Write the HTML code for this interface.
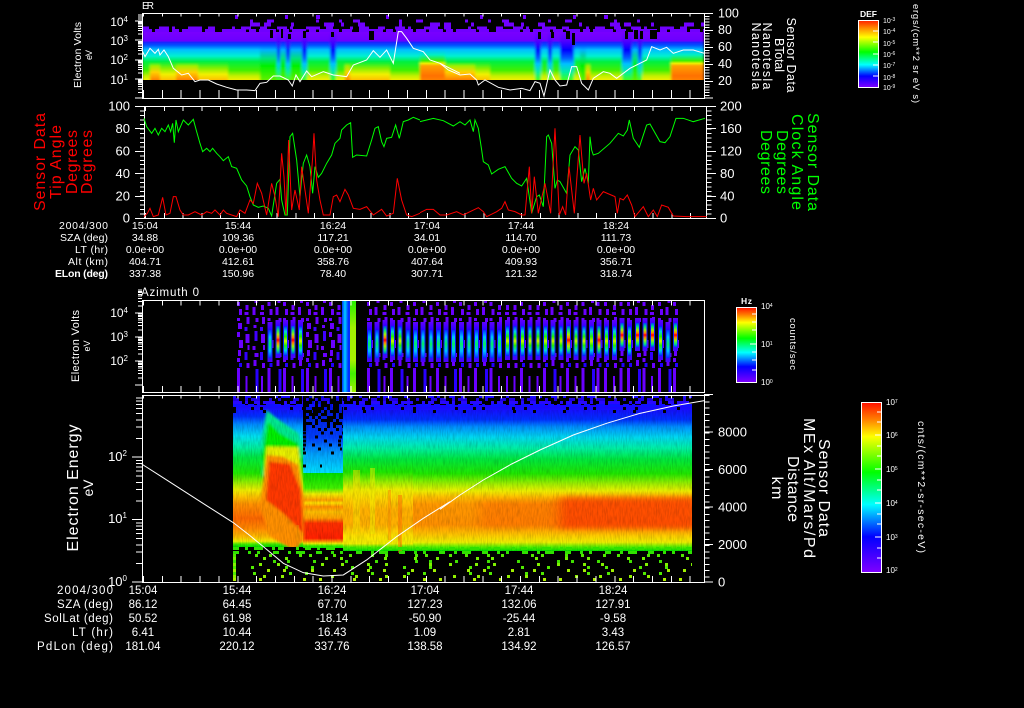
<!DOCTYPE html>
<html lang="en"><head><meta charset="utf-8"><title>MEx sensor data</title>
<style>
html,body{margin:0;padding:0;background:#000;overflow:hidden}
svg{display:block}
text{font-family:"Liberation Sans",sans-serif;fill:#fff}
.r{font-size:10.5px}.q{font-size:11.5px}
.e{text-anchor:end}.m{text-anchor:middle}
.ax{font-size:13px}
.ln{fill:none;stroke-width:1;vector-effect:non-scaling-stroke}
.nss{fill:none;stroke:#fff;stroke-width:1;vector-effect:non-scaling-stroke}
</style></head><body>
<svg xmlns="http://www.w3.org/2000/svg" width="1024" height="708" viewBox="0 0 1024 708">
<defs>
<!-- P1 gradients -->
<linearGradient id="g1" gradientUnits="userSpaceOnUse" x1="0" x2="0" y1="28" y2="80"><stop offset="0" stop-color="#8000ff"/><stop offset=".25" stop-color="#6a00ff"/><stop offset=".27" stop-color="#2020ff"/><stop offset=".33" stop-color="#0050ff"/><stop offset=".42" stop-color="#00c0ff"/><stop offset=".54" stop-color="#00f0d0"/><stop offset=".65" stop-color="#00f040"/><stop offset=".81" stop-color="#40f000"/><stop offset=".92" stop-color="#c0f000"/><stop offset="1" stop-color="#f0f000"/></linearGradient>
<linearGradient id="g2" gradientUnits="userSpaceOnUse" x1="0" x2="0" y1="28" y2="80"><stop offset="0" stop-color="#8000ff"/><stop offset=".25" stop-color="#6a00ff"/><stop offset=".27" stop-color="#2020ff"/><stop offset=".33" stop-color="#0050ff"/><stop offset=".42" stop-color="#00c0ff"/><stop offset=".54" stop-color="#00f0d0"/><stop offset=".65" stop-color="#00f040"/><stop offset=".73" stop-color="#a0f000"/><stop offset=".85" stop-color="#ffd000"/><stop offset="1" stop-color="#ff8000"/></linearGradient>
<linearGradient id="g3" gradientUnits="userSpaceOnUse" x1="0" x2="0" y1="28" y2="80"><stop offset="0" stop-color="#8000ff"/><stop offset=".25" stop-color="#5000ff"/><stop offset=".42" stop-color="#0000ff"/><stop offset=".58" stop-color="#0060ff"/><stop offset=".69" stop-color="#00c0ff"/><stop offset=".85" stop-color="#00f0a0"/><stop offset="1" stop-color="#40ff20"/></linearGradient>
<linearGradient id="g4" gradientUnits="userSpaceOnUse" x1="0" x2="0" y1="28" y2="80"><stop offset="0" stop-color="#8000ff"/><stop offset=".25" stop-color="#6a00ff"/><stop offset=".27" stop-color="#2020ff"/><stop offset=".33" stop-color="#0050ff"/><stop offset=".42" stop-color="#00c0ff"/><stop offset=".54" stop-color="#00f0d0"/><stop offset=".65" stop-color="#00f040"/><stop offset=".77" stop-color="#80f000"/><stop offset=".89" stop-color="#f0f000"/><stop offset="1" stop-color="#ffc000"/></linearGradient>
<linearGradient id="g5" gradientUnits="userSpaceOnUse" x1="0" x2="0" y1="28" y2="80"><stop offset="0" stop-color="#8000ff"/><stop offset=".25" stop-color="#6a00ff"/><stop offset=".27" stop-color="#2020ff"/><stop offset=".33" stop-color="#0050ff"/><stop offset=".42" stop-color="#00b0ff"/><stop offset=".58" stop-color="#00e080"/><stop offset=".73" stop-color="#00f000"/><stop offset="1" stop-color="#60f000"/></linearGradient>
<linearGradient id="g6" gradientUnits="userSpaceOnUse" x1="0" x2="0" y1="28" y2="80"><stop offset="0" stop-color="#8000ff"/><stop offset=".25" stop-color="#6a00ff"/><stop offset=".27" stop-color="#2020ff"/><stop offset=".33" stop-color="#0050ff"/><stop offset=".42" stop-color="#00c0ff"/><stop offset=".52" stop-color="#00f0c0"/><stop offset=".63" stop-color="#40f000"/><stop offset=".68" stop-color="#f0f000"/><stop offset=".73" stop-color="#ffa000"/><stop offset=".92" stop-color="#ff7000"/><stop offset="1" stop-color="#ff8000"/></linearGradient>
<!-- colourbars -->
<linearGradient id="cb1" x1="0" x2="0" y1="0" y2="1"><stop offset="0" stop-color="#ff2000"/><stop offset=".12" stop-color="#ff9000"/><stop offset=".25" stop-color="#ffff00"/><stop offset=".47" stop-color="#00ff00"/><stop offset=".66" stop-color="#00ffff"/><stop offset=".83" stop-color="#0000ff"/><stop offset="1" stop-color="#8000ff"/></linearGradient>
<linearGradient id="cb2" x1="0" x2="0" y1="0" y2="1"><stop offset="0" stop-color="#ff1000"/><stop offset=".1" stop-color="#ff8000"/><stop offset=".2" stop-color="#ffff00"/><stop offset=".41" stop-color="#00ff00"/><stop offset=".6" stop-color="#00ffff"/><stop offset=".79" stop-color="#0000ff"/><stop offset="1" stop-color="#8000ff"/></linearGradient>
<!-- P3 streaks -->
<linearGradient id="gb" x1="0" x2="0" y1="0" y2="1"><stop offset="0" stop-color="#6000ff"/><stop offset=".3" stop-color="#1000ff"/><stop offset=".7" stop-color="#0030ff"/><stop offset="1" stop-color="#5000ff"/></linearGradient>
<linearGradient id="gs1" x1="0" x2="0" y1="0" y2="1"><stop offset="0" stop-color="#0030ff"/><stop offset=".25" stop-color="#00c0ff"/><stop offset=".5" stop-color="#00f060"/><stop offset=".75" stop-color="#00c0ff"/><stop offset="1" stop-color="#0030ff"/></linearGradient>
<linearGradient id="gs2" x1="0" x2="0" y1="0" y2="1"><stop offset="0" stop-color="#0020ff"/><stop offset=".18" stop-color="#00d0e0"/><stop offset=".35" stop-color="#20f000"/><stop offset=".5" stop-color="#d0f000"/><stop offset=".65" stop-color="#20f000"/><stop offset=".82" stop-color="#00d0e0"/><stop offset="1" stop-color="#0020ff"/></linearGradient>
<linearGradient id="gs3" x1="0" x2="0" y1="0" y2="1"><stop offset="0" stop-color="#0040ff"/><stop offset=".15" stop-color="#00e080"/><stop offset=".3" stop-color="#a0f000"/><stop offset=".42" stop-color="#ff8000"/><stop offset=".5" stop-color="#ff0000"/><stop offset=".6" stop-color="#ff8000"/><stop offset=".72" stop-color="#a0f000"/><stop offset=".88" stop-color="#00e080"/><stop offset="1" stop-color="#0040ff"/></linearGradient>
<linearGradient id="gc" x1="0" x2="1" y1="0" y2="0"><stop offset="0" stop-color="#0030ff"/><stop offset=".5" stop-color="#00d0ff"/><stop offset="1" stop-color="#0040ff"/></linearGradient>
<linearGradient id="gg" gradientUnits="userSpaceOnUse" x1="0" x2="0" y1="300" y2="392"><stop offset="0" stop-color="#20f000"/><stop offset=".3" stop-color="#a0f000"/><stop offset=".65" stop-color="#a8f000"/><stop offset=".8" stop-color="#40f000"/><stop offset="1" stop-color="#a0f000"/></linearGradient>
<!-- P4 gradients -->
<linearGradient id="gL" gradientUnits="userSpaceOnUse" x1="0" x2="0" y1="405" y2="547"><stop offset="0" stop-color="#2000ff"/><stop offset=".08" stop-color="#0030ff"/><stop offset=".14" stop-color="#0090ff"/><stop offset=".22" stop-color="#00e0f0"/><stop offset=".3" stop-color="#00f0a0"/><stop offset=".37" stop-color="#00e840"/><stop offset=".48" stop-color="#20e800"/><stop offset=".56" stop-color="#b0f000"/><stop offset=".6" stop-color="#f0f000"/><stop offset=".65" stop-color="#ffc000"/><stop offset=".7" stop-color="#ff9000"/><stop offset=".8" stop-color="#ff6800"/><stop offset=".87" stop-color="#ff8800"/><stop offset=".93" stop-color="#ffc000"/><stop offset=".96" stop-color="#f0f000"/><stop offset=".98" stop-color="#40f000"/><stop offset="1" stop-color="#00e000"/></linearGradient>
<linearGradient id="gY" gradientUnits="userSpaceOnUse" x1="0" x2="0" y1="405" y2="551"><stop offset="0" stop-color="#2000ff"/><stop offset=".1" stop-color="#0030ff"/><stop offset=".15" stop-color="#0090ff"/><stop offset=".22" stop-color="#00d8f0"/><stop offset=".3" stop-color="#00f0a0"/><stop offset=".37" stop-color="#00e840"/><stop offset=".46" stop-color="#20e800"/><stop offset=".53" stop-color="#a0f000"/><stop offset=".58" stop-color="#f0f000"/><stop offset=".65" stop-color="#ffd000"/><stop offset=".72" stop-color="#ffb000"/><stop offset=".82" stop-color="#ffb000"/><stop offset=".89" stop-color="#ffe000"/><stop offset=".95" stop-color="#f0f000"/><stop offset=".97" stop-color="#60f000"/><stop offset="1" stop-color="#00e000"/></linearGradient>
<linearGradient id="gR" gradientUnits="userSpaceOnUse" x1="0" x2="0" y1="405" y2="551"><stop offset="0" stop-color="#2000ff"/><stop offset=".1" stop-color="#0030ff"/><stop offset=".15" stop-color="#0090ff"/><stop offset=".22" stop-color="#00d8f0"/><stop offset=".3" stop-color="#00f0a0"/><stop offset=".37" stop-color="#00e840"/><stop offset=".47" stop-color="#20e800"/><stop offset=".54" stop-color="#a0f000"/><stop offset=".59" stop-color="#f0f000"/><stop offset=".63" stop-color="#ffc000"/><stop offset=".68" stop-color="#ff9800"/><stop offset=".82" stop-color="#ff9000"/><stop offset=".89" stop-color="#ffc800"/><stop offset=".94" stop-color="#f0f000"/><stop offset=".97" stop-color="#60f000"/><stop offset="1" stop-color="#00e000"/></linearGradient>
<linearGradient id="gM" gradientUnits="userSpaceOnUse" x1="0" x2="0" y1="473" y2="548"><stop offset="0" stop-color="#00e000"/><stop offset=".2" stop-color="#40f000"/><stop offset=".28" stop-color="#f0f000"/><stop offset=".36" stop-color="#ffa000"/><stop offset=".4" stop-color="#ffe000"/><stop offset=".45" stop-color="#ff9000"/><stop offset=".52" stop-color="#ffc000"/><stop offset=".6" stop-color="#ffa000"/><stop offset=".67" stop-color="#ff3000"/><stop offset=".87" stop-color="#ff2000"/><stop offset=".91" stop-color="#ff9000"/><stop offset=".94" stop-color="#f0f000"/><stop offset=".97" stop-color="#40f000"/><stop offset="1" stop-color="#00e000"/></linearGradient>
<linearGradient id="gU" gradientUnits="userSpaceOnUse" x1="0" x2="0" y1="395" y2="473"><stop offset="0" stop-color="#0000d0"/><stop offset=".55" stop-color="#0040ff"/><stop offset=".75" stop-color="#00a0ff"/><stop offset="1" stop-color="#00e0ff"/></linearGradient>
<filter id="bl" x="-10%" y="-10%" width="120%" height="120%"><feGaussianBlur stdDeviation="4"/></filter>
<filter id="bl2" x="-10%" y="-30%" width="120%" height="160%"><feGaussianBlur stdDeviation="6 3"/></filter>
<filter id="hb" x="0" y="0" width="100%" height="100%"><feGaussianBlur stdDeviation="1.3 0"/></filter>
<filter id="nz" x="0" y="0" width="100%" height="100%"><feTurbulence type="fractalNoise" baseFrequency=".8 .12" numOctaves="2" seed="7"/><feColorMatrix values="0 0 0 0 0  0 0 0 0 0  0 0 0 0 0  1.1 0 0 0 -.42"/></filter>
<clipPath id="c4"><rect x="233" y="395" width="459" height="187"/></clipPath>
<path id="lg" class="nss" d="M-7 0H0M-4 -30H0M-4 -48H0M-4 -60H0M-4 -70H0M-4 -78H0M-4 -85H0M-4 -90H0M-4 -95H0"/>
<path id="lg4" class="nss" d="M-10 0H0M-6 -30H0M-6 -48H0M-6 -60H0M-6 -70H0M-6 -78H0M-6 -85H0M-6 -90H0M-6 -95H0"/>
<!-- P3 columns -->
<g id="a" fill="#6a00ff"><rect y="302" width="3" height="4"/><rect x="2" y="309" width="3" height="6"/><rect y="318" width="3" height="3"/><rect x="1" y="323" width="4" height="6"/><rect y="332" width="3" height="5"/><rect x="2" y="340" width="4" height="8"/><rect x="1" y="350" width="3" height="6"/><rect y="358" width="3" height="4"/><rect x="2" y="363" width="3" height="4" fill="#2000ff"/><rect y="368" width="3" height="24"/></g>
<g id="b" fill="#6a00ff"><rect x="1" y="305" width="3" height="5"/><rect y="312" width="4" height="3"/><rect x="2" y="317" width="3" height="7"/><rect y="327" width="3" height="4" fill="#4000ff"/><rect x="1" y="334" width="4" height="9"/><rect x="3" y="345" width="2" height="5"/><rect y="352" width="3" height="8" fill="#3000ff"/><rect x="2" y="363" width="3" height="5"/><rect x="1" y="376" width="2" height="16"/></g>
<g id="c" fill="#6a00ff"><rect x="2" y="300" width="3" height="3"/><rect y="307" width="3" height="8"/><rect x="3" y="318" width="3" height="4"/><rect x="1" y="325" width="3" height="3"/><rect x="2" y="331" width="3" height="10" fill="#4000ff"/><rect y="346" width="3" height="4"/><rect x="2" y="353" width="4" height="4"/><rect x="1" y="360" width="3" height="6"/><rect x="3" y="369" width="3" height="23" fill="#2800ff"/></g>
<g id="s1"><rect y="322" width="5" height="40" fill="url(#gb)"/><rect x="1" y="330" width="3" height="28" fill="url(#gs1)"/></g>
<g id="s2"><rect y="320" width="5" height="40" fill="url(#gb)"/><rect x="1" y="326" width="3" height="30" fill="url(#gs2)"/></g>
<g id="s3"><rect y="320" width="5" height="38" fill="url(#gb)"/><rect x="1" y="326" width="3" height="28" fill="url(#gs3)"/></g>
<g id="s4"><rect y="318" width="5" height="33" fill="url(#gb)"/><rect x="1" y="323" width="3" height="24" fill="url(#gs3)"/></g>
</defs>
<rect width="1024" height="708" fill="#000"/>

<!-- ============ PANEL 1 ============ -->
<g filter="url(#hb)">
<rect x="142" y="32" width="8" height="48" fill="url(#g1)"/><rect x="150" y="32" width="10" height="48" fill="url(#g2)"/><rect x="160" y="32" width="16" height="48" fill="url(#g4)"/><rect x="176" y="32" width="22" height="48" fill="url(#g2)"/><rect x="198" y="32" width="30" height="48" fill="url(#g4)"/><rect x="228" y="32" width="32" height="48" fill="url(#g1)"/><rect x="260" y="32" width="17" height="48" fill="url(#g5)"/><rect x="277" y="32" width="3" height="48" fill="url(#g3)"/><rect x="280" y="32" width="6" height="48" fill="url(#g5)"/><rect x="286" y="32" width="4" height="48" fill="url(#g3)"/><rect x="290" y="32" width="12" height="48" fill="url(#g5)"/><rect x="302" y="32" width="5" height="48" fill="url(#g3)"/><rect x="307" y="32" width="23" height="48" fill="url(#g1)"/><rect x="330" y="32" width="6" height="48" fill="url(#g3)"/><rect x="336" y="32" width="9" height="48" fill="url(#g1)"/><rect x="345" y="32" width="5" height="48" fill="url(#g2)"/><rect x="350" y="32" width="40" height="48" fill="url(#g4)"/><rect x="390" y="32" width="30" height="48" fill="url(#g1)"/><rect x="420" y="32" width="25" height="48" fill="url(#g6)"/><rect x="445" y="32" width="30" height="48" fill="url(#g2)"/><rect x="475" y="32" width="15" height="48" fill="url(#g4)"/><rect x="490" y="32" width="45" height="48" fill="url(#g1)"/><rect x="535" y="32" width="6" height="48" fill="url(#g3)"/><rect x="541" y="32" width="7" height="48" fill="url(#g1)"/><rect x="548" y="32" width="4" height="48" fill="url(#g3)"/><rect x="552" y="32" width="8" height="48" fill="url(#g1)"/><rect x="560" y="32" width="14" height="48" fill="url(#g3)"/><rect x="574" y="32" width="6" height="48" fill="url(#g1)"/><rect x="580" y="32" width="6" height="48" fill="url(#g5)"/><rect x="586" y="32" width="4" height="48" fill="url(#g2)"/><rect x="590" y="32" width="32" height="48" fill="url(#g1)"/><rect x="622" y="32" width="10" height="48" fill="url(#g3)"/><rect x="632" y="32" width="6" height="48" fill="url(#g5)"/><rect x="638" y="32" width="4" height="48" fill="url(#g3)"/><rect x="642" y="32" width="29" height="48" fill="url(#g1)"/><rect x="671" y="32" width="33" height="48" fill="url(#g6)"/>
</g>
<rect x="142" y="80" width="562" height="3" fill="#000"/>
<g shape-rendering="crispEdges">
<g fill="none" stroke="#7000ff">
<line x1="142" x2="704" y1="30.5" stroke-width="3" y2="30.5" stroke-dasharray="10 3 14 3 7 3 20 3 10 7 24 3 7 3 17 3"/>
<line x1="142" x2="704" y1="28" y2="28" stroke-width="3" stroke-dasharray="7 10 10 3 3 13 14 6 7 17 3 6 10 9"/>
<line x1="250" x2="704" y1="24.5" y2="24.5" stroke-width="4" stroke-dasharray="10 4 7 20 3 30 10 7 3 14 7 34 3 28"/>
<line x1="250" x2="640" y1="21" y2="21" stroke-width="3" stroke-dasharray="3 14 7 42 3 20 3 11 7 39"/>
<line x1="235" x2="640" y1="17" y2="17" stroke-width="4" stroke-dasharray="3 47 3 28 4 66 3 91 3 40"/>
</g>
<g fill="#000"><rect x="270" y="30" width="3" height="8"/><rect x="281" y="29" width="2" height="9"/><rect x="288" y="34" width="3" height="5"/><rect x="303" y="31" width="3" height="7"/><rect x="331" y="32" width="3" height="5"/><rect x="369" y="31" width="5" height="9"/><rect x="538" y="32" width="3" height="7"/><rect x="551" y="32" width="3" height="6"/><rect x="566" y="31" width="4" height="8"/><rect x="572" y="33" width="3" height="12"/><rect x="625" y="31" width="3" height="8"/><rect x="634" y="30" width="4" height="9"/><rect x="640" y="31" width="3" height="8"/><rect x="650" y="30" width="7" height="9"/></g>
<rect x="142.5" y="13.5" width="562" height="85" fill="none" stroke="#fff"/>
<line x1="143" x2="704" y1="15" y2="15" stroke="#fff" stroke-width="3" stroke-dasharray="1 17.85"/>
<line x1="143" x2="704" y1="94" y2="94" stroke="#fff" stroke-width="8" stroke-dasharray="1 17.85"/>
<line x1="707" x2="707" y1="13" y2="98" stroke="#fff" stroke-width="5" stroke-dasharray="1 1.83"/>
<path d="M704 13.5H713M704 30.5H713M704 47.5H713M704 64.5H713M704 81.5H713M704 98H713" stroke="#fff" fill="none"/>
<use href="#lg" transform="translate(142,98) scale(1,.19)"/>
<use href="#lg" transform="translate(142,79) scale(1,.195)"/>
<use href="#lg" transform="translate(142,60) scale(1,.195)"/>
<use href="#lg" transform="translate(142,40) scale(1,.195)"/>
<path d="M135 21H142M138 19H142M138 17H142M138 15H142" stroke="#fff"/>
</g>
<polyline class="ln" stroke="#fff" transform="translate(60,0) scale(.3333)" points="245,148 255,170 270,145 285,160 295,148 300,165 312,150 325,170 340,205 365,225 385,220 405,245 420,240 445,240 470,252 500,262 530,270 560,270 585,272 600,250 620,247 640,228 660,228 685,240 697,258 708,225 720,245 740,213 755,230 790,215 820,225 860,230 880,195 920,180 940,152 960,172 980,150 1000,190 1015,95 1025,95 1040,115 1060,145 1090,155 1110,180 1140,190 1170,205 1200,220"/>
<polyline class="ln" stroke="#fff" transform="translate(440,0) scale(.3333)" points="0,190 25,210 60,225 90,222 110,240 115,255 135,240 175,262 210,270 245,265 270,272 285,245 300,250 312,288 330,210 345,240 360,258 380,255 395,200 410,200 425,250 445,270 460,235 490,215 510,220 530,235 570,205 600,190 620,180 635,140 660,150 680,142 700,160 730,150 760,150 793,160"/>
<text x="142" y="9" font-size="10" textLength="12">ER</text>
<g font-size="12"><text x="128" y="26" class="e">10<tspan font-size="8" dy="-4">4</tspan></text><text x="128" y="45" class="e">10<tspan font-size="8" dy="-4">3</tspan></text><text x="128" y="64" class="e">10<tspan font-size="8" dy="-4">2</tspan></text><text x="128" y="84" class="e">10<tspan font-size="8" dy="-4">1</tspan></text></g>
<g font-size="12.5"><text x="718" y="17.5">100</text><text x="718" y="34">80</text><text x="718" y="51">60</text><text x="718" y="68">40</text><text x="718" y="85">20</text></g>
<text transform="translate(81,55) rotate(-90)" class="m" font-size="10.5" textLength="66">Electron Volts</text>
<text transform="translate(92,55) rotate(-90)" class="m" font-size="9" textLength="10">eV</text>
<g font-size="12.5">
<text transform="translate(787,55) rotate(90)" class="m" textLength="75">Sensor Data</text>
<text transform="translate(775,55) rotate(90)" class="m" textLength="34">BTotal</text>
<text transform="translate(763,56) rotate(90)" class="m" textLength="67">Nanotesla</text>
<text transform="translate(752,56) rotate(90)" class="m" textLength="67">Nanotesla</text>
</g>
<!-- colourbar 1 -->
<rect x="858.5" y="20.5" width="20" height="67" fill="url(#cb1)" stroke="#fff"/>
<text x="860" y="17" font-size="8.5" font-weight="bold" textLength="17">DEF</text>
<path d="M873 31H878M873 42H878M873 54H878M873 65H878M873 76H878" stroke="#fff" fill="none"/>
<g font-size="7"><text x="883" y="23">10<tspan font-size="5" dy="-2">-3</tspan></text><text x="883" y="34">10<tspan font-size="5" dy="-2">-4</tspan></text><text x="883" y="46">10<tspan font-size="5" dy="-2">-5</tspan></text><text x="883" y="57">10<tspan font-size="5" dy="-2">-6</tspan></text><text x="883" y="68">10<tspan font-size="5" dy="-2">-7</tspan></text><text x="883" y="80">10<tspan font-size="5" dy="-2">-8</tspan></text><text x="883" y="90">10<tspan font-size="5" dy="-2">-9</tspan></text></g>
<text transform="translate(913,4) rotate(90)" font-size="9.5" textLength="99">ergs/(cm**2 sr eV s)</text>

<!-- ============ PANEL 2 ============ -->
<g shape-rendering="crispEdges">
<rect x="144.5" y="106.5" width="562" height="112" fill="none" stroke="#fff"/>
<line x1="145" x2="706" y1="108.5" y2="108.5" stroke="#fff" stroke-width="5" stroke-dasharray="1 17.8"/>
<line x1="145" x2="706" y1="215.5" y2="215.5" stroke="#fff" stroke-width="5" stroke-dasharray="1 17.8"/>
<line x1="142" x2="142" y1="106" y2="218" stroke="#fff" stroke-width="4" stroke-dasharray="1 3.48"/>
<line x1="709" x2="709" y1="106" y2="218" stroke="#fff" stroke-width="5" stroke-dasharray="1 3.48"/>
<path d="M135 106.5H144M135 128.5H144M135 151.5H144M135 173.5H144M135 196.5H144M135 218.5H144M706 106.5H716M706 128.5H716M706 151.5H716M706 173.5H716M706 196.5H716M706 218.5H716" stroke="#fff" fill="none"/>
</g>
<polyline class="ln" stroke="#0f0" transform="translate(20,100) scale(.3333)" points="372,55 380,80 395,100 405,85 415,105 425,85 435,95 445,75 452,95 458,70 463,128 468,60 475,95 490,60 505,75 520,58 530,95 540,130 548,155 560,145 570,155 578,145 590,160 600,170 610,182 625,170 635,200 650,205 665,240 680,258 690,290 700,315 715,322 730,318 745,325 755,348 770,250 780,238 785,300 795,345 802,345 810,110 818,100 830,180 840,290 850,190 860,165 870,200 878,280 885,200 895,232 905,220 920,190 935,165 945,130 960,115 965,90 980,75 992,68 998,172 1010,165 1040,168 1055,120 1065,85 1075,80 1085,125 1092,140 1100,115 1115,112 1127,75 1138,115 1150,65 1165,60 1180,52 1200,60"/>
<polyline class="ln" stroke="#0f0" transform="translate(420,100) scale(.3333)" points="0,65 40,55 70,62 100,78 120,65 135,75 150,60 160,95 165,60 175,85 185,150 190,185 205,195 215,222 235,208 255,200 275,235 290,250 305,258 320,235 335,340 350,290 358,285 370,320 380,110 385,105 395,130 405,265 412,240 420,245 440,280 450,165 465,140 475,150 485,245 495,205 505,250 510,110 515,150 520,165 535,160 570,130 595,100 610,108 622,90 628,60 640,115 658,142 680,75 690,72 720,125 735,128 750,110 768,55 790,55 820,65 855,55"/>
<polyline class="ln" stroke="#f00" transform="translate(20,100) scale(.3333)" points="372,350 382,340 390,325 400,350 415,345 428,292 438,345 450,340 460,290 468,290 480,330 490,345 505,345 525,335 545,345 560,335 575,340 585,330 600,345 610,330 620,340 635,345 650,350 660,330 675,340 690,300 700,310 712,250 725,280 740,345 755,250 765,290 775,350 785,160 792,230 798,345 806,120 815,330 825,270 838,330 845,200 855,270 865,340 878,172 882,100 890,240 900,300 910,345 930,345 940,290 950,285 960,305 975,268 985,285 1000,325 1020,328 1040,320 1060,345 1085,328 1100,348 1120,340 1132,235 1145,300 1160,345 1175,350 1200,340"/>
<polyline class="ln" stroke="#f00" transform="translate(420,100) scale(.3333)" points="0,338 20,328 40,328 60,345 80,345 110,335 130,345 150,335 175,323 190,335 200,350 230,335 245,325 255,305 265,330 285,335 305,345 315,345 328,200 335,340 343,230 355,340 375,250 392,340 405,85 418,345 428,320 437,345 447,200 463,340 480,105 492,250 500,220 512,300 520,265 530,300 550,275 585,290 592,340 600,295 610,300 622,285 635,315 645,350 670,320 685,350 700,330 712,350 725,315 745,322 760,348 800,350 860,350"/>
<g class="ax"><text x="130" y="110.5" class="e">100</text><text x="130" y="133" class="e">80</text><text x="130" y="155.5" class="e">60</text><text x="130" y="178" class="e">40</text><text x="130" y="200.5" class="e">20</text><text x="130" y="222.5" class="e">0</text>
<text x="720" y="110.5">200</text><text x="720" y="133">160</text><text x="720" y="155.5">120</text><text x="720" y="178">80</text><text x="720" y="200.5">40</text><text x="720" y="222.5">0</text></g>
<g font-size="16">
<text transform="translate(45,162) rotate(-90)" class="m" style="fill:#f00" textLength="98">Sensor Data</text>
<text transform="translate(61,162) rotate(-90)" class="m" style="fill:#f00" textLength="74">Tip Angle</text>
<text transform="translate(77,162) rotate(-90)" class="m" style="fill:#f00" textLength="64">Degrees</text>
<text transform="translate(92,162) rotate(-90)" class="m" style="fill:#f00" textLength="64">Degrees</text>
<text transform="translate(808,162) rotate(90)" class="m" style="fill:#0f0" textLength="98">Sensor Data</text>
<text transform="translate(792,162) rotate(90)" class="m" style="fill:#0f0" textLength="96">Clock Angle</text>
<text transform="translate(777,162) rotate(90)" class="m" style="fill:#0f0" textLength="64">Degrees</text>
<text transform="translate(761,162) rotate(90)" class="m" style="fill:#0f0" textLength="64">Degrees</text>
</g>
<!-- info rows P2 -->
<g class="r">
<text x="108" y="229" class="e" textLength="49">2004/300</text><text x="108" y="241" class="e" textLength="48">SZA (deg)</text><text x="108" y="253" class="e" textLength="33">LT (hr)</text><text x="108" y="265" class="e" textLength="40">Alt (km)</text><text x="108" y="277" class="e" textLength="53" font-weight="bold">ELon (deg)</text>
<text x="145" y="229" class="m">15:04</text><text x="145" y="241" class="m">34.88</text><text x="145" y="253" class="m">0.0e+00</text><text x="145" y="265" class="m">404.71</text><text x="145" y="277" class="m">337.38</text>
<text x="238" y="229" class="m">15:44</text><text x="238" y="241" class="m">109.36</text><text x="238" y="253" class="m">0.0e+00</text><text x="238" y="265" class="m">412.61</text><text x="238" y="277" class="m">150.96</text>
<text x="333" y="229" class="m">16:24</text><text x="333" y="241" class="m">117.21</text><text x="333" y="253" class="m">0.0e+00</text><text x="333" y="265" class="m">358.76</text><text x="333" y="277" class="m">78.40</text>
<text x="427" y="229" class="m">17:04</text><text x="427" y="241" class="m">34.01</text><text x="427" y="253" class="m">0.0e+00</text><text x="427" y="265" class="m">407.64</text><text x="427" y="277" class="m">307.71</text>
<text x="521" y="229" class="m">17:44</text><text x="521" y="241" class="m">114.70</text><text x="521" y="253" class="m">0.0e+00</text><text x="521" y="265" class="m">409.93</text><text x="521" y="277" class="m">121.32</text>
<text x="616" y="229" class="m">18:24</text><text x="616" y="241" class="m">111.73</text><text x="616" y="253" class="m">0.0e+00</text><text x="616" y="265" class="m">356.71</text><text x="616" y="277" class="m">318.74</text>
</g>

<!-- ============ PANEL 3 ============ -->
<g shape-rendering="crispEdges">
<use href="#a" x="237"/><use href="#b" x="244.65"/><use href="#c" x="252.3"/><use href="#b" x="259.95"/><use href="#a" x="267.6"/><use href="#c" x="275.25"/><use href="#a" x="282.9"/><use href="#b" x="290.55"/><use href="#c" x="298.2"/><use href="#a" x="305.85"/><use href="#b" x="313.5"/><use href="#c" x="321.15"/><use href="#a" x="328.8"/><use href="#b" x="336.45"/>
<use href="#a" x="367.05"/><use href="#c" x="374.7"/><use href="#b" x="382.35"/><use href="#a" x="390"/><use href="#c" x="397.65"/><use href="#b" x="405.3"/><use href="#a" x="412.95"/><use href="#c" x="420.6"/><use href="#b" x="428.25"/><use href="#a" x="435.9"/><use href="#b" x="443.55"/><use href="#c" x="451.2"/><use href="#a" x="458.85"/><use href="#b" x="466.5"/><use href="#a" x="474.15"/><use href="#c" x="481.8"/><use href="#a" x="489.45"/><use href="#b" x="497.1"/><use href="#b" x="504.75"/><use href="#b" x="512.4"/><use href="#a" x="520.05"/><use href="#b" x="527.7"/><use href="#b" x="535.35"/><use href="#a" x="543"/><use href="#c" x="550.65"/><use href="#b" x="558.3"/><use href="#a" x="565.95"/><use href="#b" x="573.6"/><use href="#a" x="581.25"/><use href="#c" x="588.9"/><use href="#a" x="596.55"/><use href="#a" x="604.2"/><use href="#b" x="611.85"/><use href="#a" x="619.5"/><use href="#a" x="627.15"/><use href="#c" x="634.8"/><use href="#a" x="642.45"/><use href="#b" x="650.1"/><use href="#a" x="657.75"/><use href="#c" x="665.4"/><use href="#a" x="673.05"/>
<rect x="342" y="301" width="6" height="91" fill="url(#gc)"/><rect x="348" y="301" width="2" height="91" fill="#0030ff"/><rect x="350" y="301" width="6" height="91" fill="url(#gg)"/>
<use href="#s1" x="267.6"/><use href="#s3" x="275.25"/><use href="#s2" x="282.9"/><use href="#s3" x="290.55"/><use href="#s2" x="298.2"/>
<use href="#s1" x="367.05"/><use href="#s1" x="374.7"/><use href="#s3" x="382.35"/><use href="#s2" x="390"/><use href="#s2" x="397.65"/><use href="#s1" x="405.3"/><use href="#s1" x="412.95"/><use href="#s1" x="420.6"/><use href="#s1" x="428.25"/><use href="#s1" x="435.9"/><use href="#s1" x="443.55"/><use href="#s1" x="451.2"/><use href="#s1" x="458.85"/><use href="#s1" x="466.5"/><use href="#s1" x="474.15"/><use href="#s1" x="481.8"/><use href="#s1" x="489.45"/><use href="#s1" x="497.1"/><use href="#s2" x="504.75"/><use href="#s2" x="512.4"/><use href="#s2" x="520.05"/><use href="#s2" x="527.7"/><use href="#s2" x="535.35"/><use href="#s2" x="543"/><use href="#s2" x="550.65"/><use href="#s2" x="558.3"/><use href="#s3" x="565.95"/><use href="#s2" x="573.6"/><use href="#s2" x="581.25"/><use href="#s2" x="588.9"/><use href="#s3" x="596.55"/><use href="#s2" x="604.2"/><use href="#s2" x="611.85"/><use href="#s4" x="619.5"/><use href="#s2" x="627.15"/><use href="#s4" x="634.8"/><use href="#s4" x="642.45"/><use href="#s4" x="650.1"/><use href="#s2" x="657.75"/><use href="#s1" x="665.4"/><use href="#s4" x="673.05"/>
<rect x="142.5" y="300.5" width="562" height="92" fill="none" stroke="#fff"/>
<line x1="143" x2="704" y1="303" y2="303" stroke="#fff" stroke-width="5" stroke-dasharray="1 17.85"/>
<line x1="143" x2="704" y1="389" y2="389" stroke="#fff" stroke-width="6" stroke-dasharray="1 17.85"/>
<use href="#lg" transform="translate(142,385) scale(1,.24)"/>
<use href="#lg" transform="translate(142,361) scale(1,.24)"/>
<use href="#lg" transform="translate(142,337) scale(1,.24)"/>
<use href="#lg" transform="translate(142,313) scale(1,.24)"/>
</g>
<text x="141" y="296" font-size="11.5" textLength="58">Azimuth 0</text>
<g font-size="12"><text x="128" y="317" class="e">10<tspan font-size="8" dy="-4">4</tspan></text><text x="128" y="341" class="e">10<tspan font-size="8" dy="-4">3</tspan></text><text x="128" y="365" class="e">10<tspan font-size="8" dy="-4">2</tspan></text></g>
<text transform="translate(79,346) rotate(-90)" class="m" font-size="11" textLength="72">Electron Volts</text>
<text transform="translate(90,346) rotate(-90)" class="m" font-size="9" textLength="11">eV</text>
<rect x="736.5" y="307.5" width="20" height="75" fill="url(#cb2)" stroke="#fff"/>
<path d="M752 314H756M752 322H756M752 330H756M750 344H756M752 352H756M752 360H756M752 370H756" stroke="#fff" fill="none"/>
<text x="741" y="304" font-size="8.5" font-weight="bold" textLength="11">Hz</text>
<g font-size="8"><text x="761" y="309">10<tspan font-size="5" dy="-2">4</tspan></text><text x="761" y="347">10<tspan font-size="5" dy="-2">1</tspan></text><text x="761" y="385">10<tspan font-size="5" dy="-2">0</tspan></text></g>
<text transform="translate(790,318) rotate(90)" font-size="9.5" textLength="52">counts/sec</text>

<!-- ============ PANEL 4 ============ -->
<g shape-rendering="crispEdges" clip-path="url(#c4)">
<rect x="233" y="405" width="70" height="142" fill="url(#gL)"/>
<rect x="343" y="405" width="70" height="146" fill="url(#gY)"/>
<rect x="413" y="405" width="279" height="146" fill="url(#gR)"/>
<rect x="303" y="395" width="40" height="78" fill="url(#gU)"/>
<rect x="303" y="473" width="40" height="75" fill="url(#gM)"/>
</g>
<g clip-path="url(#c4)">
<!-- red-orange band, gradual -->
<rect x="480" y="500" width="90" height="28" fill="#ff5800" opacity=".35" filter="url(#bl2)"/>
<rect x="560" y="497" width="140" height="32" fill="#ff3800" opacity=".75" filter="url(#bl2)"/>
<g transform="translate(50,390) scale(.3333)" filter="url(#bl)">
<polygon fill="#00e890" points="635,150 650,60 680,85 745,130 762,200 635,260"/>
<polygon fill="#00f000" points="635,200 655,95 690,130 745,160 760,262 640,260"/>
<polygon fill="#e8f000" points="638,285 650,170 745,172 760,300 640,310"/>
<polygon fill="#ff9000" points="630,350 650,195 700,200 745,225 762,330 762,450 730,480 660,440"/>
<polygon fill="#ff3800" points="648,330 658,215 720,222 752,300 760,430 700,370"/>
</g>
<g opacity=".5"><rect x="353" y="470" width="7" height="62" fill="#f8e000"/><rect x="370" y="468" width="5" height="66" fill="#f0f000"/><rect x="388" y="490" width="3" height="50" fill="#ff9000"/><rect x="398" y="495" width="4" height="58" fill="#ff7000"/><rect x="296" y="525" width="3" height="22" fill="#f09000"/></g>
</g>
<rect x="233" y="410" width="459" height="141" filter="url(#nz)" clip-path="url(#c4)" opacity=".3"/>
<rect x="233" y="547" width="70" height="6" fill="#000"/>
<rect x="303" y="548" width="40" height="4" fill="#000"/>
<g shape-rendering="crispEdges" fill="none">
<g stroke-width="3">
<line x1="233" x2="692" y1="396.5" y2="396.5" stroke="#1808ff" stroke-dasharray="3 9 6 6 3 15 3 3 9 12 3 21 6 3"/>
<line x1="233" x2="692" y1="399.5" y2="399.5" stroke="#2000e0" stroke-dasharray="6 6 3 3 9 9 3 6 3 12 6 3"/>
<line x1="233" x2="692" y1="402.5" y2="402.5" stroke="#2808ff" stroke-dasharray="9 3 3 6 6 3 12 9 3 3 6 6"/>
<line x1="233" x2="692" y1="405.5" y2="405.5" stroke="#1010ff" stroke-dasharray="12 3 6 3 3 6 15 3 6 6 9 3"/>
<line x1="233" x2="692" y1="408.5" y2="408.5" stroke="#000" stroke-dasharray="3 15 3 6 3 27 3 9 3 39"/>
<line x1="233" x2="692" y1="411.5" y2="411.5" stroke="#000" stroke-dasharray="3 27 3 47 3 17"/>
</g>
<g stroke="#000" stroke-width="3">
<line x1="303" x2="343" y1="396.5" y2="396.5" stroke-dasharray="6 3 9 3 12 3"/>
<line x1="303" x2="343" y1="399.5" y2="399.5" stroke-dasharray="3 3 6 3 3 9 6 3"/>
<line x1="303" x2="343" y1="402.5" y2="402.5" stroke-dasharray="9 3 3 3 6 3 12 3"/>
<line x1="303" x2="343" y1="405.5" y2="405.5" stroke-dasharray="6 6 3 3 9 3"/>
<line x1="303" x2="343" y1="408.5" y2="408.5" stroke-dasharray="3 6 12 3 3 3 6 3"/>
<line x1="303" x2="343" y1="411.5" y2="411.5" stroke-dasharray="9 3 6 3 3 3"/>
<line x1="303" x2="343" y1="414.5" y2="414.5" stroke-dasharray="3 3 9 3 6 6"/>
<line x1="303" x2="343" y1="417.5" y2="417.5" stroke-dasharray="6 3 3 3 3 6 9 3"/>
<line x1="303" x2="343" y1="420.5" y2="420.5" stroke-dasharray="3 9 3 3 12 3"/>
<line x1="303" x2="343" y1="423.5" y2="423.5" stroke-dasharray="9 3 3 9 3 3"/>
<line x1="303" x2="343" y1="426.5" y2="426.5" stroke-dasharray="3 6 3 12 3 3"/>
<line x1="303" x2="343" y1="429.5" y2="429.5" stroke-dasharray="3 12 3 3 3 9"/>
<line x1="303" x2="343" y1="433" y2="433" stroke-dasharray="3 15 3 6 3 9"/>
<line x1="303" x2="343" y1="437" y2="437" stroke-dasharray="3 9 3 21"/>
<line x1="303" x2="343" y1="441" y2="441" stroke-dasharray="3 18 3 11"/>
<line x1="303" x2="343" y1="445" y2="445" stroke-dasharray="3 6 3 14"/>
<line x1="303" x2="343" y1="449" y2="449" stroke-dasharray="2 13 3 19"/>
<line x1="303" x2="343" y1="453" y2="453" stroke-dasharray="3 25"/>
<line x1="303" x2="343" y1="466" y2="466" stroke-dasharray="3 14 2 31"/>
</g>
<g stroke-width="3">
<line x1="233" x2="692" y1="548.5" y2="548.5" stroke="#30e000" stroke-dasharray="6 6 3 6 9 9 3 3 6 12 3 6"/>
<line x1="233" x2="692" y1="552.5" y2="552.5" stroke="#30e000" stroke-dasharray="6 9 3 6 3 13 6 9 3 5 9 11"/>
<line x1="233" x2="692" y1="555.5" y2="555.5" stroke="#50e800" stroke-dasharray="3 19 3 11 3 27 3 7 3 21 3 13"/>
<line x1="233" x2="692" y1="558.5" y2="558.5" stroke="#70f000" stroke-dasharray="3 27 3 19 3 37 3 12 3 41"/>
<line x1="233" x2="692" y1="561.5" y2="561.5" stroke="#40e000" stroke-dasharray="3 37 3 11 3 23 3 29 3 27"/>
<line x1="233" x2="692" y1="564.5" y2="564.5" stroke="#80f000" stroke-dasharray="3 23 3 15 3 41 3 17"/>
<line x1="233" x2="692" y1="567.5" y2="567.5" stroke="#50e800" stroke-dasharray="3 15 3 31 3 23 3 37"/>
<line x1="233" x2="692" y1="570.5" y2="570.5" stroke="#a0f000" stroke-dasharray="3 31 3 13 3 25 3 19"/>
<line x1="233" x2="692" y1="573.5" y2="573.5" stroke="#50e800" stroke-dasharray="3 17 3 33 3 13 3 43"/>
<line x1="233" x2="692" y1="576.5" y2="576.5" stroke="#90f000" stroke-dasharray="3 27 3 15 3 47 3 21"/>
<line x1="233" x2="692" y1="579.5" y2="579.5" stroke="#b0f000" stroke-dasharray="3 23 3 41 3 13 3 31"/>
</g>
<rect x="142.5" y="395.5" width="562" height="187" stroke="#fff"/>
<line x1="143" x2="704" y1="579" y2="579" stroke="#fff" stroke-width="6" stroke-dasharray="1 17.85"/>
<line x1="143" x2="704" y1="397" y2="397" stroke="#fff" stroke-width="3" stroke-dasharray="1 17.85"/>
<line x1="707" x2="707" y1="395" y2="582" stroke="#fff" stroke-width="5" stroke-dasharray="1 5.25"/>
<path d="M704 394.5H713M704 432H713M704 469.5H713M704 507H713M704 544.5H713M704 582H713" stroke="#fff"/>
</g>
<g shape-rendering="crispEdges">
<use href="#lg4" transform="translate(142,582) scale(1,.62)"/>
<use href="#lg4" transform="translate(142,519.5) scale(1,.62)"/>
<use href="#lg4" transform="translate(142,457) scale(1,.62)"/>
</g>
<polyline class="ln" stroke="#fff" transform="translate(50,390) scale(.3333)" points="275,222 330,257 400,302 470,347 550,398 600,437 640,470 700,520 760,548 820,558 880,555 950,510 1040,440 1120,385 1200,335"/>
<polyline class="ln" stroke="#fff" transform="translate(440,390) scale(.3333)" points="0,358 60,315 130,270 215,222 300,180 400,135 500,100 600,70 700,48 793,32"/>
<g font-size="13"><text x="127" y="461" class="e">10<tspan font-size="8" dy="-5">2</tspan></text><text x="127" y="523" class="e">10<tspan font-size="8" dy="-5">1</tspan></text><text x="127" y="586" class="e">10<tspan font-size="8" dy="-5">0</tspan></text></g>
<g font-size="13"><text x="718" y="436.5">8000</text><text x="718" y="474">6000</text><text x="718" y="511.5">4000</text><text x="718" y="549">2000</text><text x="718" y="586.5">0</text></g>
<text transform="translate(78,488) rotate(-90)" class="m" font-size="16" textLength="127">Electron Energy</text>
<text transform="translate(93,488) rotate(-90)" class="m" font-size="14" textLength="17">eV</text>
<g font-size="16">
<text transform="translate(819,488) rotate(90)" class="m" textLength="98">Sensor Data</text>
<text transform="translate(804,488) rotate(90)" class="m" textLength="140">MEx Alt/Mars/Pd</text>
<text transform="translate(788,489) rotate(90)" class="m" textLength="66">Distance</text>
<text transform="translate(772,488) rotate(90)" class="m" textLength="23">km</text>
</g>
<rect x="861.5" y="402.5" width="20" height="170" fill="url(#cb2)" stroke="#fff"/>
<path d="M875 435H881M875 469H881M875 503H881M875 537H881M877 412H881M877 422H881M877 446H881M877 456H881M877 480H881M877 490H881M877 514H881M877 524H881M877 548H881M877 558H881" stroke="#fff" fill="none"/>
<g font-size="8"><text x="886" y="405">10<tspan font-size="5" dy="-2">7</tspan></text><text x="886" y="438">10<tspan font-size="5" dy="-2">6</tspan></text><text x="886" y="472">10<tspan font-size="5" dy="-2">5</tspan></text><text x="886" y="506">10<tspan font-size="5" dy="-2">4</tspan></text><text x="886" y="540">10<tspan font-size="5" dy="-2">3</tspan></text><text x="886" y="573">10<tspan font-size="5" dy="-2">2</tspan></text></g>
<text transform="translate(918,421) rotate(90)" font-size="10.5" textLength="132">cnts/(cm**2-sr-sec-eV)</text>
<!-- info rows P4 -->
<g class="q">
<text x="113" y="594" class="e" textLength="56">2004/300</text><text x="113" y="608" class="e" textLength="56">SZA (deg)</text><text x="113" y="622" class="e" textLength="69">SolLat (deg)</text><text x="113" y="636" class="e" textLength="41">LT (hr)</text><text x="113" y="650" class="e" textLength="76">PdLon (deg)</text>
<text x="143" y="594" class="m">15:04</text><text x="143" y="608" class="m">86.12</text><text x="143" y="622" class="m">50.52</text><text x="143" y="636" class="m">6.41</text><text x="143" y="650" class="m">181.04</text>
<text x="237" y="594" class="m">15:44</text><text x="237" y="608" class="m">64.45</text><text x="237" y="622" class="m">61.98</text><text x="237" y="636" class="m">10.44</text><text x="237" y="650" class="m">220.12</text>
<text x="332" y="594" class="m">16:24</text><text x="332" y="608" class="m">67.70</text><text x="332" y="622" class="m">-18.14</text><text x="332" y="636" class="m">16.43</text><text x="332" y="650" class="m">337.76</text>
<text x="425" y="594" class="m">17:04</text><text x="425" y="608" class="m">127.23</text><text x="425" y="622" class="m">-50.90</text><text x="425" y="636" class="m">1.09</text><text x="425" y="650" class="m">138.58</text>
<text x="519" y="594" class="m">17:44</text><text x="519" y="608" class="m">132.06</text><text x="519" y="622" class="m">-25.44</text><text x="519" y="636" class="m">2.81</text><text x="519" y="650" class="m">134.92</text>
<text x="613" y="594" class="m">18:24</text><text x="613" y="608" class="m">127.91</text><text x="613" y="622" class="m">-9.58</text><text x="613" y="636" class="m">3.43</text><text x="613" y="650" class="m">126.57</text>
</g>
</svg>
</body></html>
